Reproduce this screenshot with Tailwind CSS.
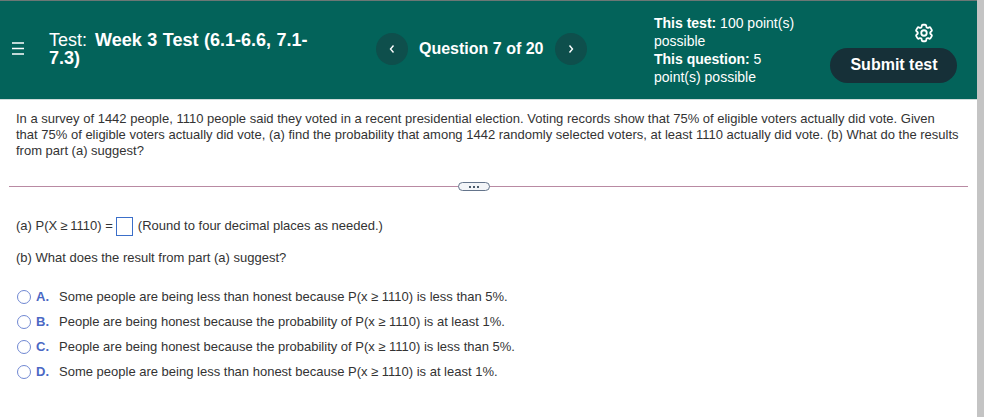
<!DOCTYPE html>
<html lang="en">
<head>
    <meta charset="UTF-8">
    <title>Test: Week 3 Test</title>
    <script src="https://cdn.jsdelivr.net/npm/@tailwindcss/browser@4"></script>
</head>
<body class="bg-white font-['Liberation_Sans',Arial,sans-serif] overflow-hidden h-[417px]">
<div class="flex h-[417px]">
    <main class="w-[977px] shrink-0">
        <!-- Top bar -->
        <header class="h-[100px] bg-[#03635a] border-t border-t-[#6b7775] border-b border-b-[#cfdcda] text-white flex items-center">
            <svg class="ml-[11px] w-[15px] h-[15px] -mt-[3px] shrink-0" viewBox="0 0 15 15" fill="none" stroke="white" stroke-width="1.500">
                <path d="M1 2h12M1 7.500h12M1 13h12"/>
            </svg>
            <div class="ml-[23px] w-[280px] text-[18px] leading-[18px] -mt-[2px]">Test: <b class="ml-[3px] [word-spacing:0.5px]">Week 3 Test (6.1-6.6, 7.1-7.3)</b></div>
            <div class="ml-[47px] flex items-center -mt-[2px]">
                <div class="w-[32px] h-[32px] rounded-full bg-[#0e4f4c] flex items-center justify-center">
                    <svg class="w-[8px] h-[10px]" viewBox="0 0 8 10" fill="none" stroke="white" stroke-width="1.400"><path d="M5.500 1.500 2.500 5l3 3.500"/></svg>
                </div>
                <div class="ml-[11px] w-[125px] text-[16px] font-bold">Question 7 of 20</div>
                <div class="ml-[11px] w-[32px] h-[32px] rounded-full bg-[#0e4f4c] flex items-center justify-center">
                    <svg class="w-[8px] h-[10px]" viewBox="0 0 8 10" fill="none" stroke="white" stroke-width="1.400"><path d="M2.500 1.500 5.500 5l-3 3.500"/></svg>
                </div>
            </div>
            <div class="ml-[67px] w-[150px] text-[14px] leading-[18px]">
                <p><b>This test:</b> 100 point(s) possible</p>
                <p><b>This question:</b> 5 point(s) possible</p>
            </div>
            <div class="ml-[26px] w-[127px] flex flex-col">
                <svg class="w-[22px] h-[22px] mt-[4px] self-end mr-[22px]" viewBox="0 0 24 24" fill="none" stroke="white" stroke-width="2" stroke-linejoin="round">
                    <path d="M9.594 3.940c.09-.542.56-.94 1.110-.94h2.593c.55 0 1.020.398 1.110.94l.213 1.281c.063.374.313.686.645.870.074.04.147.083.22.127.325.196.72.257 1.075.124l1.217-.456a1.125 1.125 0 0 1 1.370.49l1.296 2.247a1.125 1.125 0 0 1-.26 1.431l-1.003.827c-.293.241-.438.613-.43.992a7.723 7.723 0 0 1 0 .255c-.008.378.137.75.43.991l1.004.827c.424.35.534.955.26 1.430l-1.298 2.247a1.125 1.125 0 0 1-1.369.491l-1.217-.456c-.355-.133-.75-.072-1.076.124a6.470 6.470 0 0 1-.22.128c-.331.183-.581.495-.644.869l-.213 1.281c-.09.543-.56.94-1.110.94h-2.594c-.55 0-1.019-.398-1.110-.94l-.213-1.281c-.062-.374-.312-.686-.644-.87a6.520 6.520 0 0 1-.22-.127c-.325-.196-.72-.257-1.076-.124l-1.217.456a1.125 1.125 0 0 1-1.369-.49l-1.297-2.247a1.125 1.125 0 0 1 .26-1.431l1.004-.827c.292-.24.437-.613.43-.991a6.932 6.932 0 0 1 0-.255c.007-.38-.138-.751-.43-.992l-1.004-.827a1.125 1.125 0 0 1-.26-1.430l1.297-2.247a1.125 1.125 0 0 1 1.370-.491l1.216.456c.356.133.751.072 1.076-.124.072-.044.146-.086.22-.128.332-.183.582-.495.644-.869l.214-1.280Z"/>
                    <circle cx="12" cy="12" r="3"/>
                </svg>
                <div class="mt-[4px] w-[127px] h-[35px] pl-[1px] rounded-full bg-[#163038] flex items-center justify-center text-[16px] font-bold">Submit test</div>
            </div>
        </header>

        <!-- Question stem -->
        <section class="px-[16px] pt-[11px] text-[#333] text-[13px] leading-[16px]">
            <p>In a survey of 1442 people, 1110 people said they voted in a recent presidential election. Voting records show that 75% of eligible voters actually did vote. Given<br>that 75% of eligible voters actually did vote, (a) find the probability that among 1442 randomly selected voters, at least 1110 actually did vote. (b) What do the results<br>from part (a) suggest?</p>
        </section>

        <div class="relative mt-[27px] mx-[9px] h-px bg-[#b98aa3]">
            <div class="absolute left-[449px] -top-[4px] w-[32px] h-[9px] rounded-full border border-[#64748b] bg-[#f3f5f8] flex items-center justify-center gap-[2px]">
                <span class="w-[2px] h-[2px] bg-[#4b5b6b]"></span>
                <span class="w-[2px] h-[2px] bg-[#4b5b6b]"></span>
                <span class="w-[2px] h-[2px] bg-[#4b5b6b]"></span>
            </div>
        </div>

        <!-- Answer parts -->
        <section class="px-[16px] text-[#333] text-[13px] leading-[16px]">
            <div class="mt-[29px] flex items-center h-[20px]">
                <span>(a) P(X<span class="mx-[3px]">≥</span>1110) =</span>
                <span class="ml-[3px] w-[17px] h-[19px] border border-[#3b6fc9]"></span>
                <span class="ml-[5px]">(Round to four decimal places as needed.)</span>
            </div>
            <p class="mt-[14px]">(b) What does the result from part (a) suggest?</p>

            <ul class="mt-[23px] flex flex-col gap-[9px]">
                <li class="flex items-center h-[16px]">
                    <span class="ml-[1px] w-[14px] h-[14px] rounded-full border-[1.500px] border-[#7088d2] shrink-0"></span>
                    <b class="ml-[5px] w-[23px] text-[#4a68c4]">A.</b>
                    <span>Some people are being less than honest because P(x<span class="mx-[3.500px]">≥</span>1110) is less than 5%.</span>
                </li>
                <li class="flex items-center h-[16px]">
                    <span class="ml-[1px] w-[14px] h-[14px] rounded-full border-[1.500px] border-[#7088d2] shrink-0"></span>
                    <b class="ml-[5px] w-[23px] text-[#4a68c4]">B.</b>
                    <span>People are being honest because the probability of P(x<span class="mx-[3.500px]">≥</span>1110) is at least 1%.</span>
                </li>
                <li class="flex items-center h-[16px]">
                    <span class="ml-[1px] w-[14px] h-[14px] rounded-full border-[1.500px] border-[#7088d2] shrink-0"></span>
                    <b class="ml-[5px] w-[23px] text-[#4a68c4]">C.</b>
                    <span>People are being honest because the probability of P(x<span class="mx-[3.500px]">≥</span>1110) is less than 5%.</span>
                </li>
                <li class="flex items-center h-[16px]">
                    <span class="ml-[1px] w-[14px] h-[14px] rounded-full border-[1.500px] border-[#7088d2] shrink-0"></span>
                    <b class="ml-[5px] w-[23px] text-[#4a68c4]">D.</b>
                    <span>Some people are being less than honest because P(x<span class="mx-[3.500px]">≥</span>1110) is at least 1%.</span>
                </li>
            </ul>
        </section>
    </main>
    <div class="w-[7px] bg-[#c4c4c4] shrink-0"></div>
</div>
</body>
</html>
